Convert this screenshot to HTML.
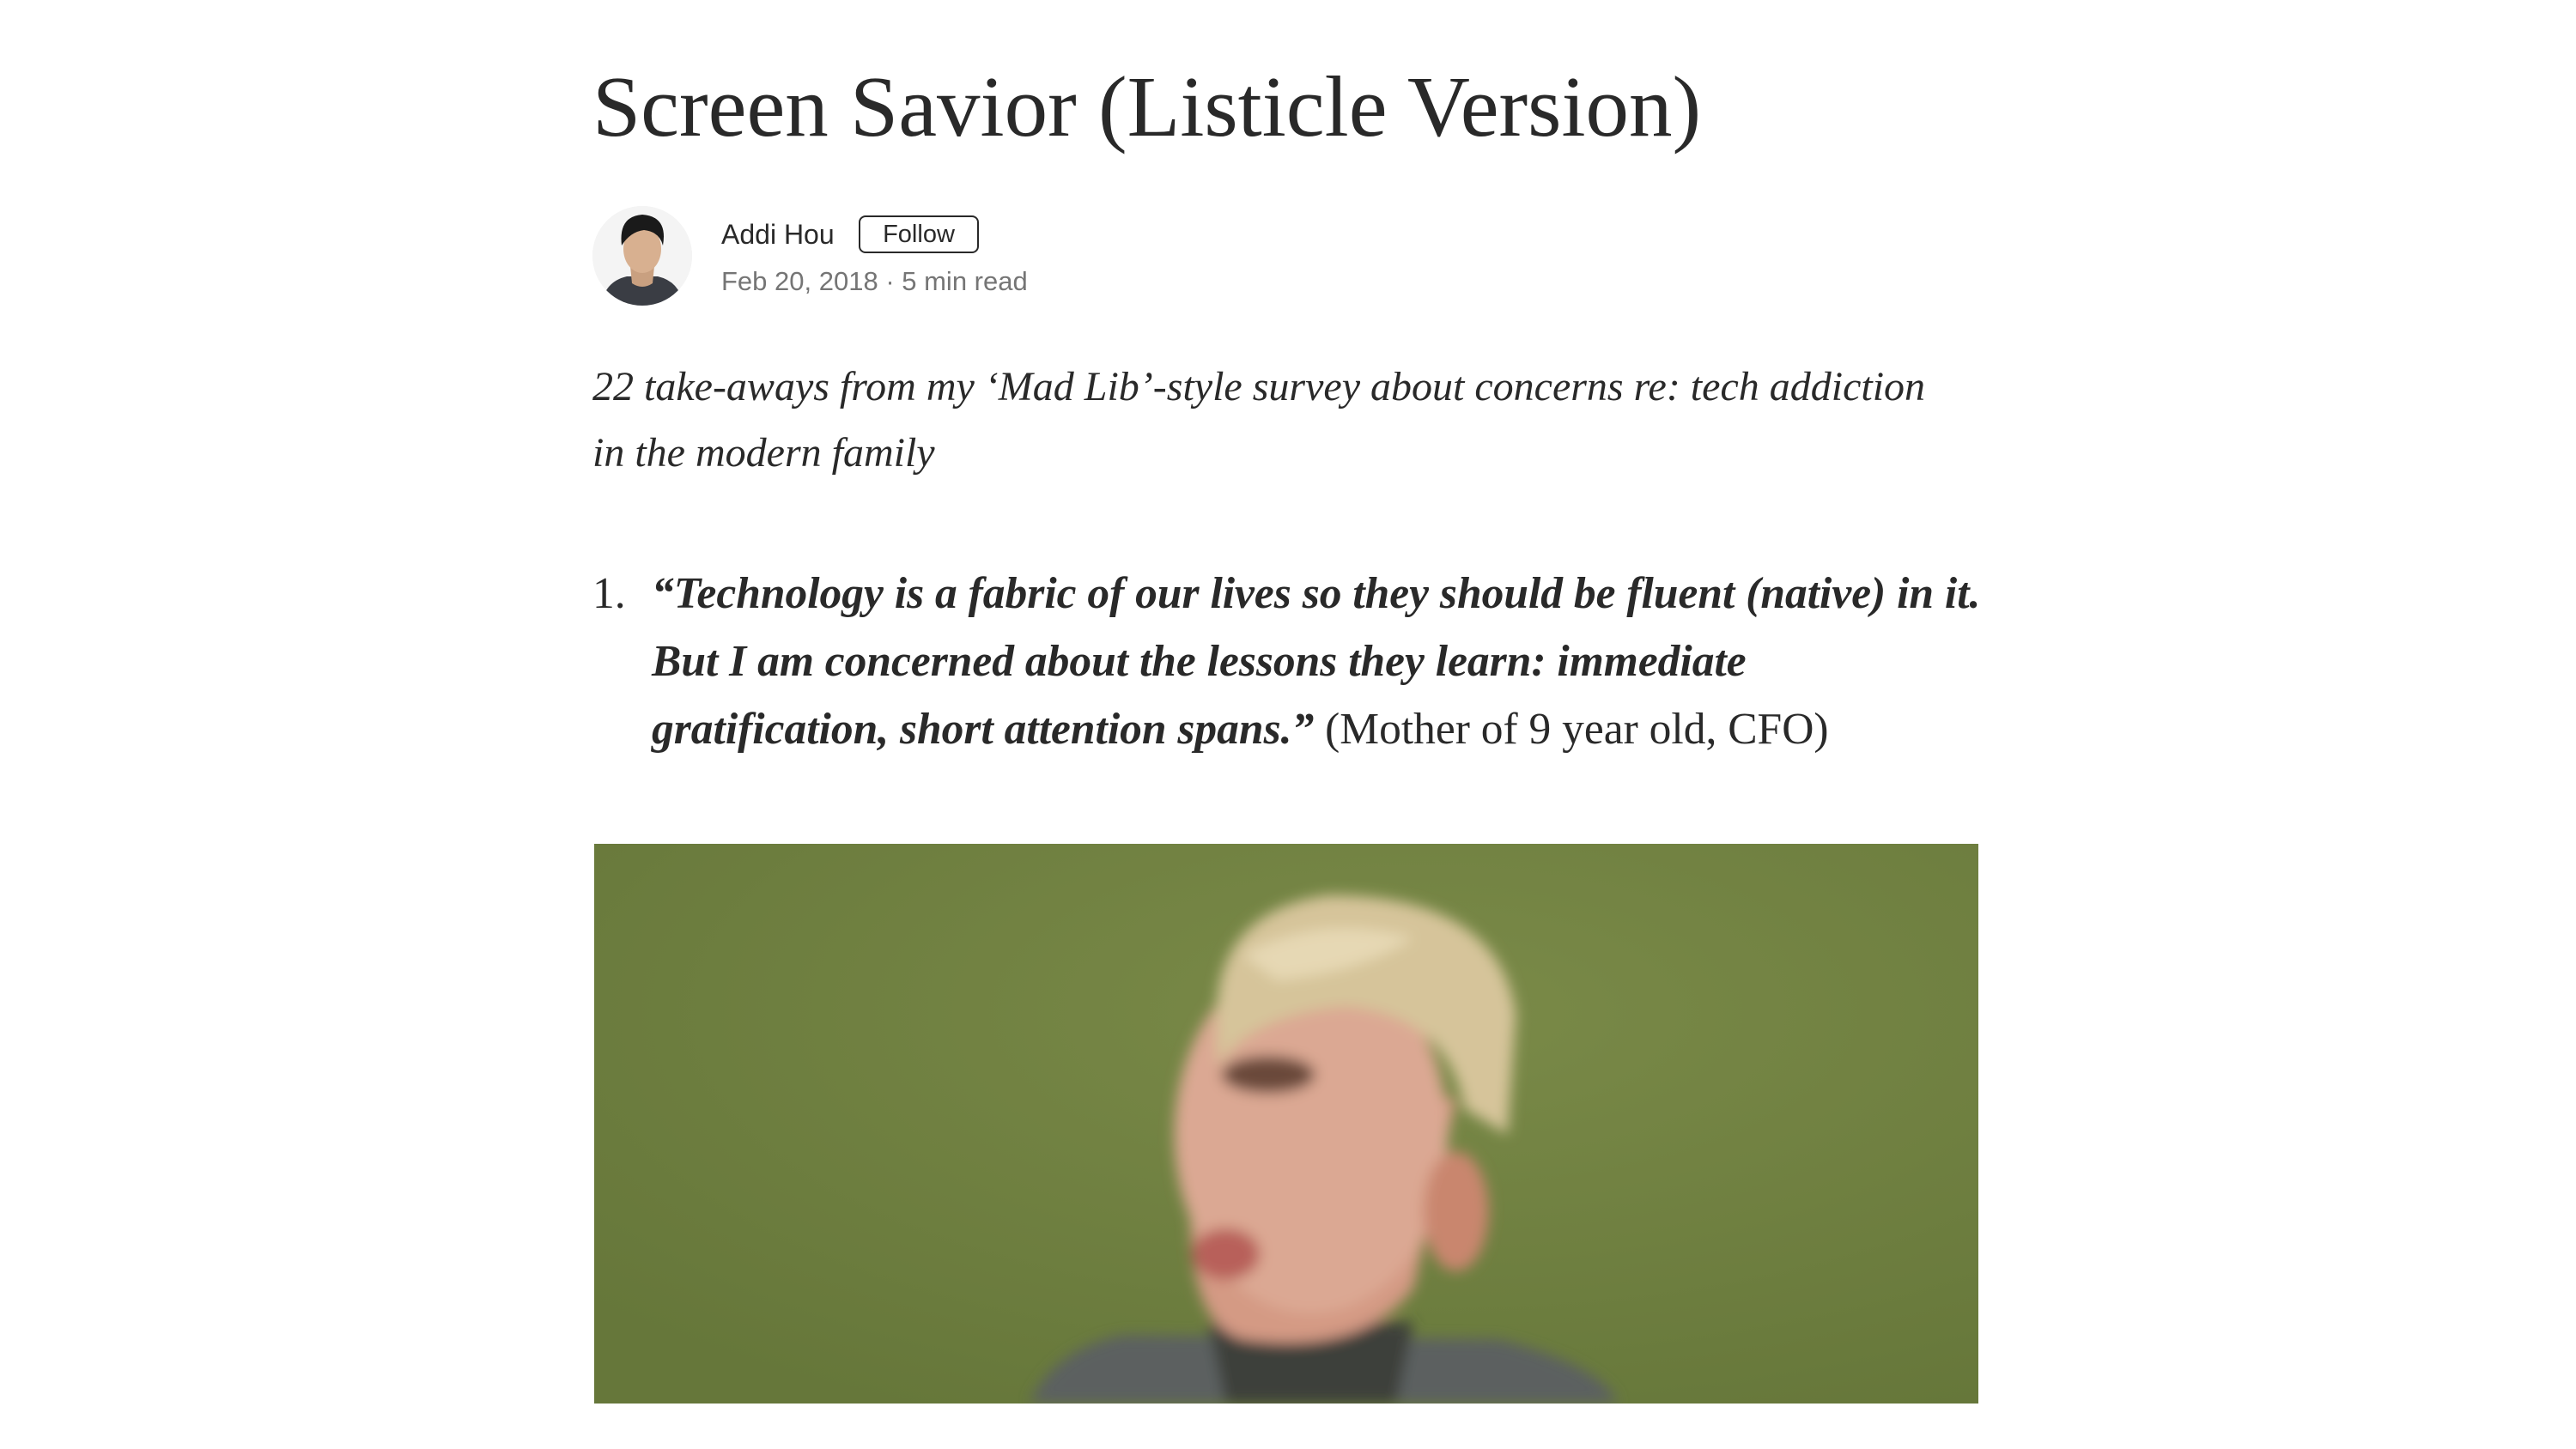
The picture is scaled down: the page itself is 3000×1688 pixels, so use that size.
<!DOCTYPE html>
<html><head><meta charset="utf-8"><style>
html,body{margin:0;padding:0;background:#fff;width:3000px;height:1688px;overflow:hidden}
body{position:relative;color:#292929}
.t{position:absolute;left:690px;top:64px;font-family:"Liberation Serif",serif;font-size:101px;white-space:nowrap;color:#292929;line-height:1.2}
.av{position:absolute;left:690px;top:240px;width:116px;height:116px;border-radius:50%;background:#f2f2f2;overflow:hidden}
.name{position:absolute;left:840px;top:251px;font-family:"Liberation Sans",sans-serif;font-size:32px;color:#292929;line-height:44px}
.fol{position:absolute;left:1000px;top:251px;width:136px;height:40px;border:2px solid #292929;border-radius:8px;font-family:"Liberation Sans",sans-serif;font-size:29px;line-height:40px;text-align:center;color:#292929}
.date{position:absolute;left:840px;top:306px;font-family:"Liberation Sans",sans-serif;font-size:31px;color:#757575;line-height:44px}
.sub{position:absolute;left:690px;top:412px;width:1600px;font-family:"Liberation Serif",serif;font-style:italic;font-size:48px;line-height:77px;color:#292929}
.li{position:absolute;left:690px;top:652px;width:1700px;font-family:"Liberation Serif",serif;font-size:51.5px;line-height:79px;color:#292929;white-space:nowrap}
.li .n{position:absolute;left:0;top:0}
.li .b{margin-left:69px;display:block}
.li i b{font-weight:bold}
.img{position:absolute;left:692px;top:983px;width:1612px;height:652px;overflow:hidden;background:#6e7e3e}
</style></head><body>
<div class="t">Screen Savior (Listicle Version)</div>
<div class="av"><svg width="116" height="116" viewBox="0 0 116 116">
<rect width="116" height="116" fill="#f4f4f4"/>
<path d="M10 116 Q14 88 40 82 L76 82 Q102 88 106 116Z" fill="#3a3d44"/>
<path d="M44 70 L72 70 L70 90 Q58 98 46 90Z" fill="#c9a080"/>
<ellipse cx="58" cy="50" rx="22" ry="28" fill="#d8b090"/>
<path d="M34 46 Q30 12 58 10 Q88 12 82 46 Q78 30 60 28 Q44 30 34 46Z" fill="#1a1a1a"/>
</svg></div>
<div class="name">Addi Hou</div>
<div class="fol">Follow</div>
<div class="date">Feb 20, 2018 · 5 min read</div>
<div class="sub">22 take-aways from my ‘Mad Lib’-style survey about concerns re: tech addiction in the modern family</div>
<div class="li"><span class="n">1.</span><span class="b"><i><b>“Technology is a fabric of our lives so they should be fluent (native) in it.<br>But I am concerned about the lessons they learn: immediate<br>gratification, short attention spans.”</b></i> (Mother of 9 year old, CFO)</span></div>
<div class="img"><svg width="1612" height="652" viewBox="0 0 1622 655" preserveAspectRatio="none">
<defs><filter id="bl"><feGaussianBlur stdDeviation="8"/></filter>
<radialGradient id="bg" cx="0.6" cy="0.3" r="0.8"><stop offset="0" stop-color="#7a8a48"/><stop offset="1" stop-color="#66773a"/></radialGradient></defs>
<rect width="1622" height="655" fill="url(#bg)"/>
<g filter="url(#bl)">
<path d="M510 655 Q540 590 620 575 L1060 580 Q1180 610 1200 655Z" fill="#5b6160"/>
<path d="M720 560 L960 560 L940 655 L740 655Z" fill="#3c3f3a"/>
<path d="M700 400 Q690 560 760 580 Q900 600 960 520 L1010 300 L760 220Z" fill="#d49a84"/>
<ellipse cx="840" cy="340" rx="160" ry="210" fill="#dba893"/>
<ellipse cx="1010" cy="430" rx="38" ry="70" fill="#c9866e"/>
<ellipse cx="740" cy="480" rx="40" ry="30" fill="#b8605a"/>
<ellipse cx="790" cy="270" rx="55" ry="22" fill="#6b4a3a"/>
<path d="M730 220 Q720 80 860 60 Q1060 60 1080 200 L1070 340 L1020 310 Q1000 200 880 190 Q770 200 730 260Z" fill="#d6c49a"/>
<path d="M760 130 Q850 80 960 110 Q900 150 800 160Z" fill="#e6d8b4"/>
</g></svg></div>
</body></html>
